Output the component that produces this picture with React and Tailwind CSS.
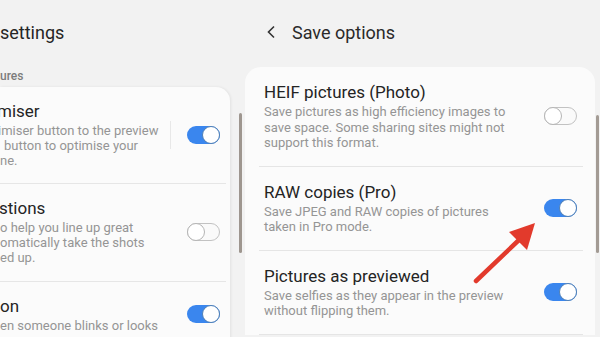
import React from 'react';

const Toggle = ({ on }) =>
  on ? (
    <div className="flex h-[18px] w-[33px] flex-none items-center justify-end rounded-full bg-[#3a86ee]">
      <div className="h-[18px] w-[18px] rounded-full border border-[#4f7fb5] bg-white" />
    </div>
  ) : (
    <div className="flex h-[18px] w-[33px] flex-none items-center justify-start rounded-full border border-[#c2c2c2] bg-[#fafafa]">
      <div className="-ml-px h-[18px] w-[18px] rounded-full border border-[#b5b5b5] bg-white" />
    </div>
  );

const leftItems = [
  {
    title: 'miser',
    titleShift: '-ml-[3px]',
    lines: [
      ['imiser button to the preview', '-ml-[2px]'],
      ['button to optimise your', 'ml-[4px]'],
      ['ne.', 'ml-0'],
    ],
    on: true,
    divider: true,
  },
  {
    title: 'stions',
    titleShift: '-ml-[1px]',
    lines: [
      ['o help you line up great', 'ml-0'],
      ['omatically take the shots', 'ml-0'],
      ['ed up.', 'ml-0'],
    ],
    on: false,
  },
  {
    title: 'on',
    titleShift: 'ml-0',
    lines: [['en someone blinks or looks', 'ml-0']],
    on: true,
  },
];

const rightItems = [
  {
    title: 'HEIF pictures (Photo)',
    lines: [
      'Save pictures as high efficiency images to',
      'save space. Some sharing sites might not',
      'support this format.',
    ],
    on: false,
  },
  {
    title: 'RAW copies (Pro)',
    lines: ['Save JPEG and RAW copies of pictures', 'taken in Pro mode.'],
    on: true,
  },
  {
    title: 'Pictures as previewed',
    lines: ['Save selfies as they appear in the preview', 'without flipping them.'],
    on: true,
  },
];

export default function App() {
  return (
    <div className="relative flex h-[337px] w-[600px] overflow-hidden bg-[#f2f2f2] font-['Roboto',sans-serif]">
      {/* left screen (cropped) */}
      <div className="relative w-[245px] flex-none overflow-hidden">
        <div className="flex h-[64px] items-center text-[18px] text-[#252525]">settings</div>
        <div className="flex h-[23px] items-center text-[12px] font-medium text-[#7c7c7c]">ures</div>
        <div className="w-[230px] rounded-tr-[14px] bg-[#fbfbfb] shadow-[1px_0_3px_rgba(0,0,0,0.07)]">
          {leftItems.map((item, i) => (
            <div key={i}>
              {i > 0 && <div className="mr-[4px] h-px bg-[#e6e6e6]" />}
              <div className="flex items-center pb-[15px] pr-[10px] pt-[14px]">
                <div className="min-w-0 flex-1 whitespace-nowrap">
                  <div className={`text-[17px] leading-[20px] text-[#242424] ${item.titleShift}`}>{item.title}</div>
                  <div className="mt-[3px] text-[13px] leading-[14.75px] text-[#959595]">
                    {item.lines.map(([t, s], j) => (
                      <div key={j} className={s}>{t}</div>
                    ))}
                  </div>
                </div>
                {item.divider && <div className="mr-[16px] h-[28px] w-px bg-[#e8e8e8]" />}
                <Toggle on={item.on} />
              </div>
            </div>
          ))}
        </div>
        <div className="absolute left-[239px] top-[113px] h-[140px] w-[3px] rounded-full bg-[#9e968f]" />
      </div>

      {/* right screen */}
      <div className="relative flex-1">
        <div className="flex h-[67px] items-center pb-[3px] text-[#2a2a2a]">
          <svg className="ml-[21px] h-[14px] w-[10px]" viewBox="0 0 10 14" fill="none" stroke="#333" strokeWidth="1.6">
            <path d="M8 1.5 2.5 7 8 12.5" />
          </svg>
          <span className="ml-[16px] text-[18px]">Save options</span>
        </div>
        <div className="w-[350px] rounded-t-[16px] bg-[#fbfbfb]">
          {rightItems.map((item, i) => (
            <div key={i}>
              <div className="flex items-center pb-[15px] pl-[19px] pr-[18px] pt-[15px]">
                <div className="flex-1 whitespace-nowrap">
                  <div className="text-[17px] leading-[20px] text-[#242424]">{item.title}</div>
                  <div className="mt-[2px] text-[13px] leading-[15.5px] text-[#959595]">
                    {item.lines.map((t, j) => (
                      <div key={j}>{t}</div>
                    ))}
                  </div>
                </div>
                <Toggle on={item.on} />
              </div>
              <div className="ml-[14px] mr-[12px] h-px bg-[#e5e5e5]" />
            </div>
          ))}
        </div>
        <div className="absolute left-[351px] top-[115px] h-[138px] w-[3px] rounded-full bg-[#a39b94]" />
      </div>

      {/* red annotation arrow */}
      <svg className="absolute left-[470px] top-[215px] h-[72px] w-[75px]" viewBox="0 0 75 72">
        <line x1="6" y1="66" x2="50" y2="24" stroke="#e23a2c" strokeWidth="4.5" strokeLinecap="round" />
        <polygon points="65,8 39,17 57,35" fill="#e23a2c" />
      </svg>
    </div>
  );
}
